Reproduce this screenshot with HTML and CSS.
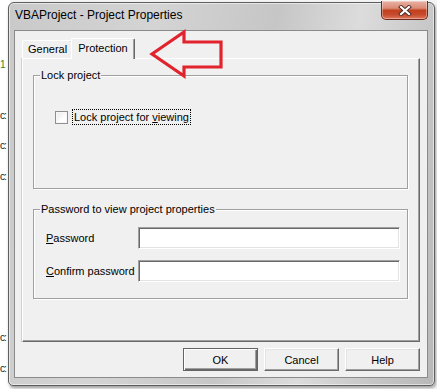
FILE: index.html
```html
<!DOCTYPE html>
<html>
<head>
<meta charset="utf-8">
<link rel="stylesheet" href="styles.css">
</head>
<body>
<div class="desktop">
  <div class="code">
    <span class="ln ln1 green">1</span>
    <span class="ln ln2">c:</span>
    <span class="ln ln3">c:</span>
    <span class="ln ln4">c:</span>
    <span class="ln ln5">c:</span>
    <span class="ln ln6">c:</span>
  </div>
  <div class="window">
    <div class="titlebar">
      <span class="title">VBAProject - Project Properties</span>
      <div class="close">
        <svg width="14" height="11" viewBox="0 0 14 11">
          <path d="M3 2 L11 9 M11 2 L3 9" stroke="#4a2a22" stroke-width="4" stroke-linecap="square"/>
          <path d="M3 2 L11 9 M11 2 L3 9" stroke="#ffffff" stroke-width="2.2" stroke-linecap="square"/>
        </svg>
      </div>
    </div>
    <div class="client">
      <div class="tabs">
        <div class="tab">General</div>
        <div class="tab active">Protection</div>
      </div>
      <div class="panel">
        <div class="group lock">
          <span class="legend">Lock project</span>
          <label class="check"><span class="box"></span><span class="focus">Lock project for <u>v</u>iewing</span></label>
        </div>
        <div class="group pw">
          <span class="legend">Password to view project properties</span>
          <div class="fields">
            <span class="lbl"><u>P</u>assword</span><span class="input"></span>
            <span class="lbl"><u>C</u>onfirm password</span><span class="input"></span>
          </div>
        </div>
      </div>
      <div class="buttons">
        <button class="btn default">OK</button>
        <button class="btn">Cancel</button>
        <button class="btn">Help</button>
      </div>
    </div>
  </div>
  <svg class="arrow" width="437" height="389" viewBox="0 0 437 389">
    <path d="M152 54 L184 32 L184 42 L221 42 L221 67 L184 67 L184 76 Z" fill="none" stroke="#e1232d" stroke-width="3.2" stroke-linejoin="miter"/>
  </svg>
</div>
</body>
</html>
```
FILE: styles.css
```css
html, body {
  margin: 0;
  padding: 0;
  width: 437px;
  height: 389px;
  overflow: hidden;
  background: #ffffff;
  font-family: "Liberation Sans", Arial, sans-serif;
  font-size: 11px;
  color: #000;
}

.desktop {
  position: relative;
  width: 437px;
  height: 389px;
  box-sizing: border-box;
  padding: 2px 0 0 8px;
  background: #f4f4f4;
}

.code {
  position: absolute;
  left: 0;
  top: 0;
  width: 10px;
  height: 389px;
  background: #ffffff;
}

.ln {
  position: absolute;
  left: 0;
  font-family: "Liberation Sans", Arial, sans-serif;
  font-size: 10px;
  line-height: 12px;
  letter-spacing: -1px;
  color: #222;
}
.ln1 { top: 59px; color: #2f8a2f; }
.ln2 { top: 110px; }
.ln3 { top: 140px; }
.ln4 { top: 171px; }
.ln5 { top: 332px; }
.ln6 { top: 363px; }

.window {
  position: relative;
  width: 427px;
  height: 384px;
  box-sizing: border-box;
  border: 1px solid #5e5e5e;
  border-radius: 6px 6px 5px 5px;
  padding: 0 6px 7px 5px;
  background: linear-gradient(100deg, #c9c9c9 0%, #d4d4d4 30%, #c6c6c6 55%, #dcdcdc 72%, #c5c5c5 88%, #b8b8b8 100%);
  box-shadow: inset 0 0 0 1px rgba(255,255,255,0.55), 1px 2px 3px rgba(0,0,0,0.35);
  display: flex;
  flex-direction: column;
}

.titlebar {
  height: 27px;
  display: flex;
  justify-content: space-between;
  align-items: flex-start;
}

.title {
  margin: 5px 0 0 1px;
  font-size: 12px;
  line-height: 14px;
  color: #000;
}

.close {
  width: 47px;
  height: 19px;
  margin-top: -2px;
  box-sizing: border-box;
  border: 1px solid #6e2a1c;
  border-top: none;
  border-radius: 0 0 5px 5px;
  background: linear-gradient(to bottom, #e9b2a4 0%, #da8a74 40%, #c3401f 52%, #c64a2c 75%, #e07659 100%);
  box-shadow: inset 0 0 0 1px rgba(255,255,255,0.35);
  display: flex;
  align-items: center;
  justify-content: center;
}

.client {
  width: 414px;
  height: 348px;
  box-sizing: border-box;
  border: 1px solid #8a8a8a;
  background: #f0f0f0;
  padding: 7px 7px 0 7px;
  display: flex;
  flex-direction: column;
}

.tabs {
  display: flex;
  height: 20px;
  align-items: flex-end;
  position: relative;
  z-index: 1;
}

.tab {
  height: 18px;
  line-height: 17px;
  padding: 0 5px;
  box-sizing: border-box;
  border-top: 1px solid #ffffff;
  border-left: 1px solid #ffffff;
  border-right: 1px solid #696969;
  box-shadow: inset -1px 0 0 #a0a0a0;
  border-radius: 2px 2px 0 0;
  background: #f0f0f0;
  white-space: nowrap;
}

.tab.active {
  height: 21px;
  line-height: 18px;
  margin-bottom: -1px;
  margin-left: -2px;
  padding: 0 6px;
}

.panel {
  height: 284px;
  box-sizing: border-box;
  border: 1px solid;
  border-color: #ffffff #696969 #696969 #ffffff;
  box-shadow: inset -1px -1px 0 #a0a0a0, -1px 0 0 #d0d0d0;
  padding: 16px 11px 0 10px;
  display: flex;
  flex-direction: column;
}

.group {
  box-sizing: border-box;
  border: 1px solid #a0a0a0;
  box-shadow: inset 1px 1px 0 #ffffff, 1px 1px 0 #ffffff;
  display: flex;
  flex-direction: column;
}

.lock { height: 114px; }
.pw { height: 90px; margin-top: 20px; }

.legend {
  align-self: flex-start;
  margin: -8px 0 0 6px;
  padding: 0 1px;
  line-height: 14px;
  background: #f0f0f0;
  white-space: nowrap;
}

.check {
  display: flex;
  align-items: center;
  margin: 27px 0 0 21px;
}

.box {
  width: 13px;
  height: 13px;
  box-sizing: border-box;
  border: 1px solid #8f8f8f;
  background: linear-gradient(135deg, #e9e9e9, #ffffff 65%);
  box-shadow: inset 0 0 0 1px #f7f7f7;
  margin-right: 4px;
}

.focus {
  border: 1px dotted #000;
  padding: 0 1px;
  line-height: 14px;
  white-space: nowrap;
}

.fields {
  display: grid;
  grid-template-columns: 92px 262px;
  row-gap: 11px;
  margin: 11px 0 0 12px;
  align-items: center;
}

.lbl {
  line-height: 14px;
  white-space: nowrap;
}

.input {
  height: 22px;
  box-sizing: border-box;
  background: #ffffff;
  border: 1px solid;
  border-color: #a0a0a0 #ffffff #ffffff #a0a0a0;
  box-shadow: inset 1px 1px 0 #696969, inset -1px -1px 0 #e3e3e3;
}

.buttons {
  display: flex;
  justify-content: flex-end;
  gap: 6px;
  margin-top: 6px;
}

.btn {
  width: 75px;
  height: 23px;
  padding: 0;
  font-family: "Liberation Sans", Arial, sans-serif;
  font-size: 11px;
  color: #000;
  background: #f0f0f0;
  border: 1px solid;
  border-color: #ffffff #696969 #696969 #ffffff;
  box-shadow: inset -1px -1px 0 #a0a0a0, inset 1px 1px 0 #e3e3e3;
}

.btn.default {
  border-color: #646464;
  box-shadow: inset 1px 1px 0 #ffffff, inset -1px -1px 0 #696969, inset -2px -2px 0 #a0a0a0;
}

.arrow {
  position: absolute;
  left: 0;
  top: 0;
  pointer-events: none;
}
```
